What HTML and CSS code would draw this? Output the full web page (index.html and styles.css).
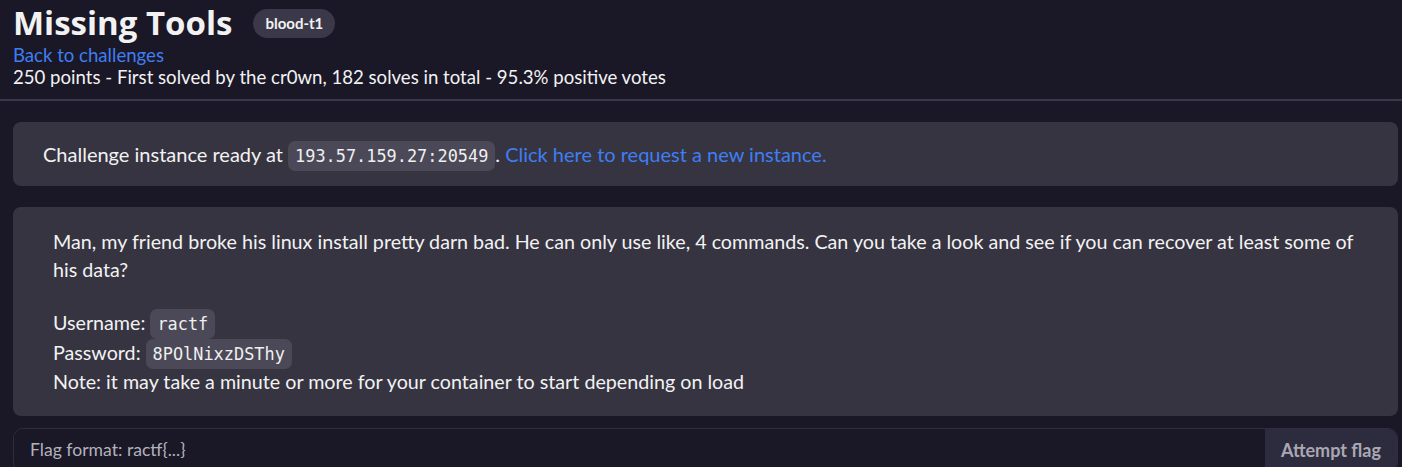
FILE: index.html
```html
<!DOCTYPE html>
<html>
<head>
<meta charset="utf-8">
<link rel="stylesheet" href="styles.css">
</head>
<body>
<header class="head">
  <div class="title-row">
    <h1 class="title">Missing Tools</h1>
    <span class="pill">blood-t1</span>
  </div>
  <a class="link" href="#">Back to challenges</a>
  <div class="meta">250 points - First solved by the cr0wn, 182 solves in total - 95.3% positive votes</div>
</header>
<main class="content">
  <section class="card instance">
    Challenge instance ready at <code class="code">193.57.159.27:20549</code>. <a class="link" href="#">Click here to request a new instance.</a>
  </section>
  <section class="card desc">
    <p class="para">Man, my friend broke his linux install pretty darn bad. He can only use like, 4 commands. Can you take a look and see if you can recover at least some of his data?</p>
    <p class="para creds">Username: <code class="code">ractf</code><br>Password: <code class="code">8POlNixzDSThy</code><br>Note: it may take a minute or more for your container to start depending on load</p>
  </section>
  <form class="flag">
    <input class="flag-input" type="text" placeholder="Flag format: ractf{...}">
    <button class="flag-btn" type="button">Attempt flag</button>
  </form>
</main>
</body>
</html>
```
FILE: styles.css
```css
html, body {
  margin: 0;
  padding: 0;
  background: #1a1827;
  color: #f2f2f2;
  font-family: Lato, "Open Sans", sans-serif;
  font-size: 20px;
}
.head {
  padding: 5px 13px 11px;
  border-bottom: 2px solid #3a3848;
  font-size: 18.6px;
}
.title-row {
  display: flex;
  align-items: center;
  gap: 21px;
  margin-bottom: 3px;
}
.title {
  margin: 0;
  font-family: "Open Sans", sans-serif;
  font-weight: 700;
  font-size: 33px;
  line-height: 36px;
}
.pill {
  background: #3b3949;
  border-radius: 15px;
  padding: 0 12px;
  height: 29px;
  display: inline-flex;
  align-items: center;
  font-size: 15px;
  font-weight: 700;
  font-family: Lato, sans-serif;
}
.link {
  color: #3f7ef2;
  text-decoration: none;
}
.head .link {
  display: block;
  line-height: 22px;
}
.meta {
  line-height: 22px;
}
.content {
  padding: 21px 4px 0 13px;
  display: flex;
  flex-direction: column;
}
.card {
  background: #363441;
  border-radius: 8px;
}
.instance {
  padding: 18px 30px;
  line-height: 28px;
}
.code {
  font-family: "DejaVu Sans Mono", monospace;
  font-size: 16.9px;
  line-height: 1;
  background: #4b4957;
  border-radius: 7px;
  padding: 5px 7px;
  color: #efefef;
}
.desc {
  margin-top: 21px;
  padding: 21px 40px 19px;
  font-size: 19.7px;
}
.para {
  margin: 0 0 24px;
  line-height: 28px;
}
.para.creds {
  margin: 0;
  line-height: 29.5px;
}
.flag {
  display: flex;
  margin-top: 12px;
  height: 42px;
  border: 1px solid #302e3c;
  border-radius: 10px;
  overflow: hidden;
}
.flag-input {
  flex: 1;
  background: #1a1827;
  border: none;
  padding: 0 16px;
  font-family: Lato, sans-serif;
  font-size: 17.6px;
  color: #f2f2f2;
  outline: none;
}
.flag-input::placeholder {
  color: #b3b2bb;
}
.flag-btn {
  background: #2d2b3e;
  color: #a9a8b2;
  border: none;
  padding: 0 16px;
  font-family: Lato, sans-serif;
  font-weight: 700;
  font-size: 18px;
}
```
